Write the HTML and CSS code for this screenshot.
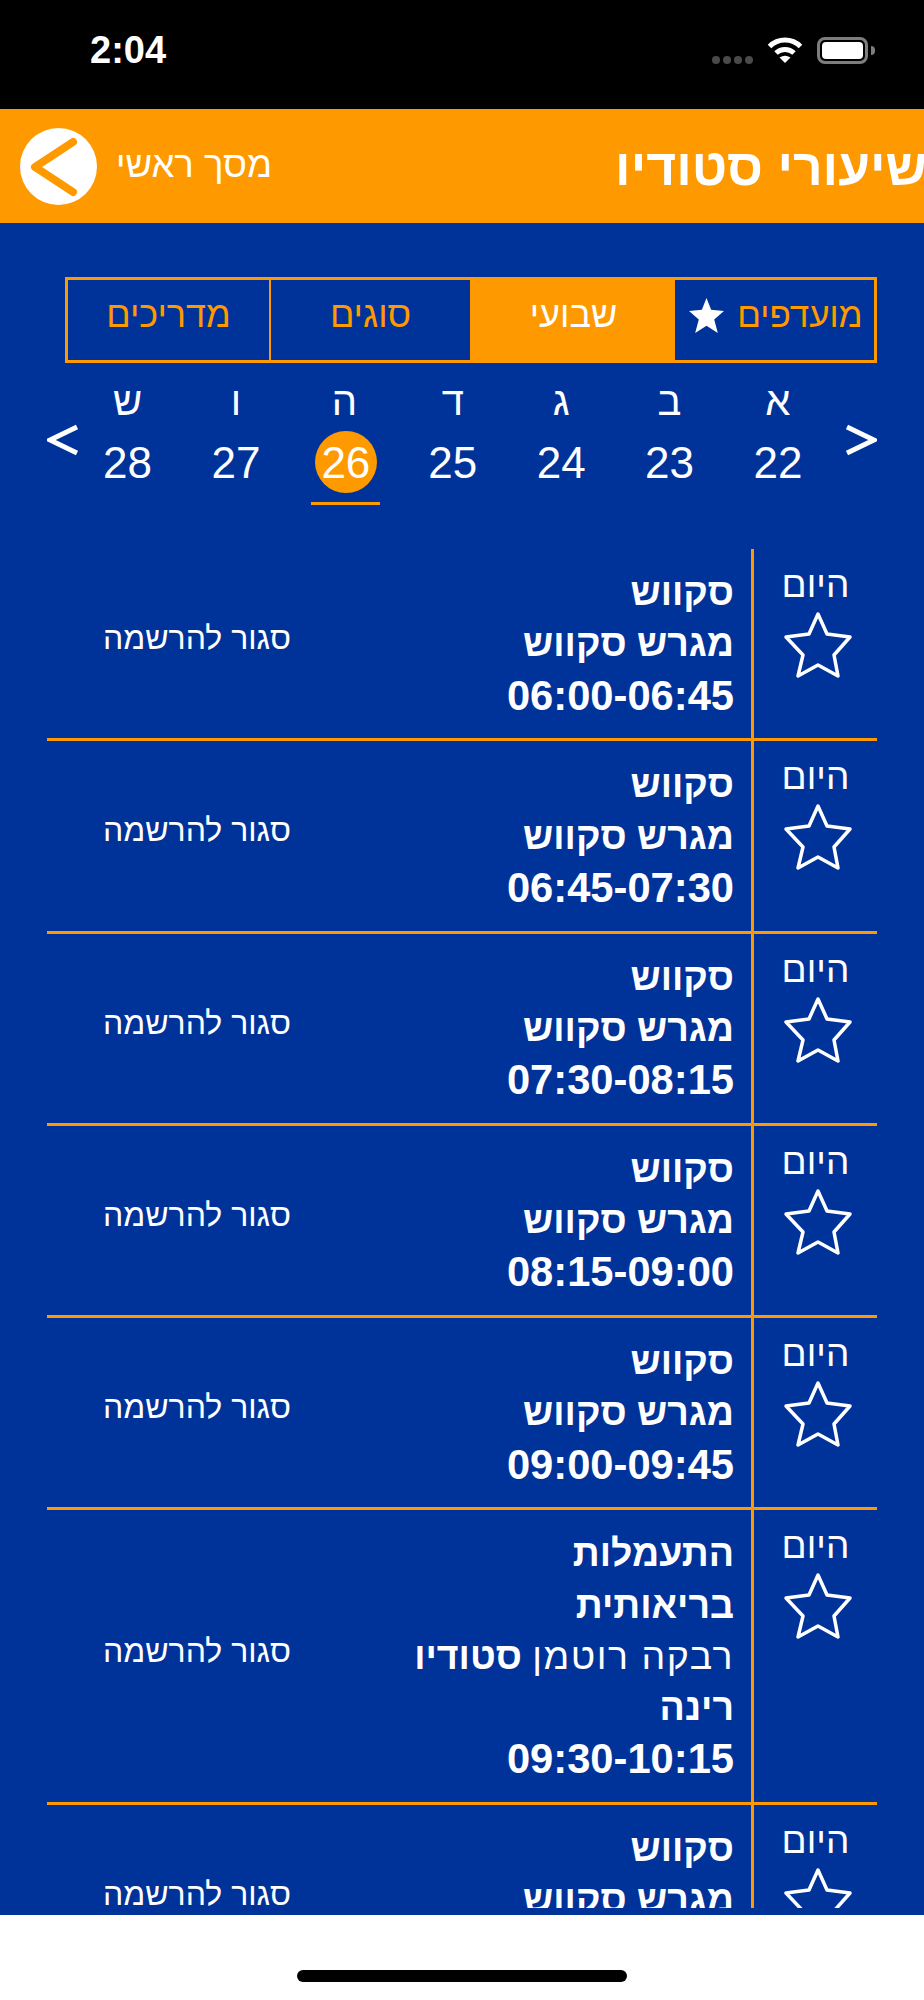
FILE: index.html
```html
<!DOCTYPE html>
<html lang="he">
<head>
<meta charset="utf-8">
<title>שיעורי סטודיו</title>
<link rel="stylesheet" href="styles.css">
</head>
<body>
<div class="app">
  <div class="status">
    <span class="clock">2:04</span>
    <div class="indicators">
      <div class="signal"><i></i><i></i><i></i><i></i></div>
      <svg class="wifi" viewBox="0 0 36 26"><path d="M2.500 9.500A22 22 0 0 1 33.500 9.500M9 16A13 13 0 0 1 27 16" fill="none" stroke="#fff" stroke-width="5"/><path d="M12.500 20.500Q18 17 23.500 20.500L18 26z" fill="#fff"/></svg>
      <div class="battery"><div class="battery-fill"></div></div>
      <div class="battery-nub"></div>
    </div>
  </div>
  <header class="topbar">
    <h1 class="title">שיעורי סטודיו</h1>
    <div class="back">
      <span class="back-label">מסך ראשי</span>
      <svg class="back-icon" viewBox="0 0 77 77"><circle cx="38.500" cy="38.500" r="38.500" fill="#fff"/><path d="M53 14 15 39 53 64" fill="none" stroke="#f90" stroke-width="8" stroke-linecap="round" stroke-linejoin="round"/></svg>
    </div>
  </header>
  <main class="main">
    <nav class="tabs">
      <div class="tab tab-fav"><span>מועדפים</span><svg class="tab-star" viewBox="0 0 72 72"><path d="M36 2 45 25 70 27 51 44 58 70 36 56 14 70 21 44 2 27 27 25z" fill="#fff"/></svg></div>
      <div class="tab tab-active">שבועי</div>
      <div class="tab">סוגים</div>
      <div class="tab tab-last">מדריכים</div>
    </nav>
    <section class="week">
      <svg class="arrow" viewBox="0 0 31 32"><path d="M1 3 28 16 1 29" fill="none" stroke="#fff" stroke-width="5"/></svg>
      <div class="days">
        <div class="day"><span class="day-name">א</span><span class="day-num">22</span></div>
        <div class="day"><span class="day-name">ב</span><span class="day-num">23</span></div>
        <div class="day"><span class="day-name">ג</span><span class="day-num">24</span></div>
        <div class="day"><span class="day-name">ד</span><span class="day-num">25</span></div>
        <div class="day day-today"><span class="day-name">ה</span><span class="day-num">26</span></div>
        <div class="day"><span class="day-name">ו</span><span class="day-num">27</span></div>
        <div class="day"><span class="day-name">ש</span><span class="day-num">28</span></div>
      </div>
      <svg class="arrow" viewBox="0 0 31 32"><path d="M30 3 3 16 30 29" fill="none" stroke="#fff" stroke-width="5"/></svg>
    </section>
    <section class="list">
      <article class="row">
        <div class="side"><span class="today">היום</span><svg class="star" viewBox="0 0 72 72"><path d="M36 4 45 24 68 27 52 45 56 66 36 55 16 66 21 45 4 27 27 24z" fill="none" stroke="#fff" stroke-width="3.500" stroke-linejoin="round"/></svg></div>
        <div class="info"><b>סקווש</b><br><b>מגרש סקווש</b><b class="time">06:00-06:45</b></div>
        <div class="status-text">סגור להרשמה</div>
      </article>
      <article class="row">
        <div class="side"><span class="today">היום</span><svg class="star" viewBox="0 0 72 72"><path d="M36 4 45 24 68 27 52 45 56 66 36 55 16 66 21 45 4 27 27 24z" fill="none" stroke="#fff" stroke-width="3.500" stroke-linejoin="round"/></svg></div>
        <div class="info"><b>סקווש</b><br><b>מגרש סקווש</b><b class="time">06:45-07:30</b></div>
        <div class="status-text">סגור להרשמה</div>
      </article>
      <article class="row">
        <div class="side"><span class="today">היום</span><svg class="star" viewBox="0 0 72 72"><path d="M36 4 45 24 68 27 52 45 56 66 36 55 16 66 21 45 4 27 27 24z" fill="none" stroke="#fff" stroke-width="3.500" stroke-linejoin="round"/></svg></div>
        <div class="info"><b>סקווש</b><br><b>מגרש סקווש</b><b class="time">07:30-08:15</b></div>
        <div class="status-text">סגור להרשמה</div>
      </article>
      <article class="row">
        <div class="side"><span class="today">היום</span><svg class="star" viewBox="0 0 72 72"><path d="M36 4 45 24 68 27 52 45 56 66 36 55 16 66 21 45 4 27 27 24z" fill="none" stroke="#fff" stroke-width="3.500" stroke-linejoin="round"/></svg></div>
        <div class="info"><b>סקווש</b><br><b>מגרש סקווש</b><b class="time">08:15-09:00</b></div>
        <div class="status-text">סגור להרשמה</div>
      </article>
      <article class="row">
        <div class="side"><span class="today">היום</span><svg class="star" viewBox="0 0 72 72"><path d="M36 4 45 24 68 27 52 45 56 66 36 55 16 66 21 45 4 27 27 24z" fill="none" stroke="#fff" stroke-width="3.500" stroke-linejoin="round"/></svg></div>
        <div class="info"><b>סקווש</b><br><b>מגרש סקווש</b><b class="time">09:00-09:45</b></div>
        <div class="status-text">סגור להרשמה</div>
      </article>
      <article class="row">
        <div class="side"><span class="today">היום</span><svg class="star" viewBox="0 0 72 72"><path d="M36 4 45 24 68 27 52 45 56 66 36 55 16 66 21 45 4 27 27 24z" fill="none" stroke="#fff" stroke-width="3.500" stroke-linejoin="round"/></svg></div>
        <div class="info"><b>התעמלות בריאותית</b><br><span class="teacher">רבקה רוטמן</span> <b>סטודיו רינה</b><b class="time">09:30-10:15</b></div>
        <div class="status-text">סגור להרשמה</div>
      </article>
      <article class="row">
        <div class="side"><span class="today">היום</span><svg class="star" viewBox="0 0 72 72"><path d="M36 4 45 24 68 27 52 45 56 66 36 55 16 66 21 45 4 27 27 24z" fill="none" stroke="#fff" stroke-width="3.500" stroke-linejoin="round"/></svg></div>
        <div class="info"><b>סקווש</b><br><b>מגרש סקווש</b><b class="time">10:15-11:00</b></div>
        <div class="status-text">סגור להרשמה</div>
      </article>
    </section>
  </main>
  <footer class="home"><div class="home-bar"></div></footer>
</div>
</body>
</html>
```
FILE: styles.css
```css
* { box-sizing: border-box; }
html, body { margin: 0; padding: 0; background: #fff; }
body { font-family: "Liberation Sans", Arial, sans-serif; color: #fff; }
.app { width: 924px; height: 2000px; display: flex; flex-direction: column; overflow: hidden; }

.status { height: 109px; flex: none; background: #000; display: flex; justify-content: space-between; align-items: flex-start; padding: 30px 49px 0 90px; }
.clock { font-size: 38px; line-height: 40px; font-weight: 700; }
.indicators { display: flex; align-items: flex-start; padding-top: 7px; }
.signal { display: flex; gap: 3px; margin-top: 19px; margin-right: 14px; }
.signal i { width: 8px; height: 8px; border-radius: 50%; background: #4a4a4a; }
.wifi { width: 36px; height: 26px; margin-right: 14px; }
.battery { width: 51px; height: 27px; border: 3px solid #7d7d7d; border-radius: 8px; padding: 2px; }
.battery-fill { width: 100%; height: 100%; background: #fff; border-radius: 4px; }
.battery-nub { width: 4px; height: 9px; margin: 9px 0 0 3px; background: #7d7d7d; border-radius: 0 4px 4px 0; }

.topbar { height: 114px; flex: none; background: #f90; display: flex; align-items: center; justify-content: space-between; overflow: hidden; padding: 0 0 0 20px; }
.title { order: 2; margin: 2px -3px 0 0; font-size: 51.500px; line-height: 56px; font-weight: 700; white-space: nowrap; direction: rtl; }
.back { order: 1; display: flex; align-items: center; gap: 19px; }
.back-icon { width: 77px; height: 77px; display: block; }
.back-label { order: 2; font-size: 36.500px; line-height: 40px; direction: rtl; margin-top: -2px; }

.main { flex: 1; min-height: 0; background: #039; padding: 54px 47px 7px; display: flex; flex-direction: column; direction: rtl; }

.tabs { flex: none; height: 86px; margin-left: 18px; display: grid; grid-template-columns: 199px 205px 201px 1fr; border: 3px solid #f90; }
.tab { display: flex; align-items: center; justify-content: center; color: #f90; font-size: 36px; padding-bottom: 10px; border-left: 2px solid #f90; }
.tab-last { border-left: 0; }
.tab-active { background: #f90; color: #fff; }
.tab-fav { gap: 12px; border-left: 0; font-size: 35px; padding-left: 2px; }
.tab-star { width: 37px; height: 37px; flex: none; }

.week { flex: none; height: 134px; padding-top: 15px; display: flex; align-items: flex-start; justify-content: space-between; }
.arrow { width: 31px; height: 32px; margin-top: 46px; flex: none; }
.days { flex: none; margin-right: 18.500px; display: grid; grid-template-columns: repeat(7, 99px); column-gap: 9.400px; }
.day { display: flex; flex-direction: column; align-items: center; }
.day-name { font-size: 40px; line-height: 46px; }
.day-num { width: 69px; height: 74px; margin-top: 7px; font-size: 44px; line-height: 64px; text-align: center; direction: ltr; }
.day-today .day-num { margin-right: -3px; border-bottom: 3px solid #f90; position: relative; z-index: 0; }
.day-today .day-num::before { content: ""; position: absolute; z-index: -1; left: 3.500px; top: 0; width: 62px; height: 62px; border-radius: 50%; background: #f90; }

.list { flex: 1; min-height: 0; margin-top: 52px; overflow: hidden; }
.row { display: grid; grid-template-columns: 126px 339px 1fr; border-bottom: 3px solid #f90; }
.side { border-left: 3px solid #f90; display: flex; flex-direction: column; align-items: center; padding-top: 13px; }
.today { font-size: 37px; line-height: 46px; }
.star { width: 72px; height: 72px; margin-top: 2px; margin-right: -4px; display: block; }
.info { padding: 18px 17px 17.500px 0; font-size: 37.500px; line-height: 51.250px; }
.teacher { letter-spacing: 1.500px; }
.time { display: block; font-size: 41.700px; direction: ltr; text-align: right; }
.status-text { align-self: center; text-align: center; font-size: 32px; line-height: 40px; padding: 0 0 11px 0; margin-right: 65px; direction: rtl; white-space: nowrap; }

.home { height: 85px; flex: none; background: #fff; display: flex; justify-content: center; padding-top: 55px; }
.home-bar { width: 330px; height: 12px; border-radius: 6px; background: #000; }
```
